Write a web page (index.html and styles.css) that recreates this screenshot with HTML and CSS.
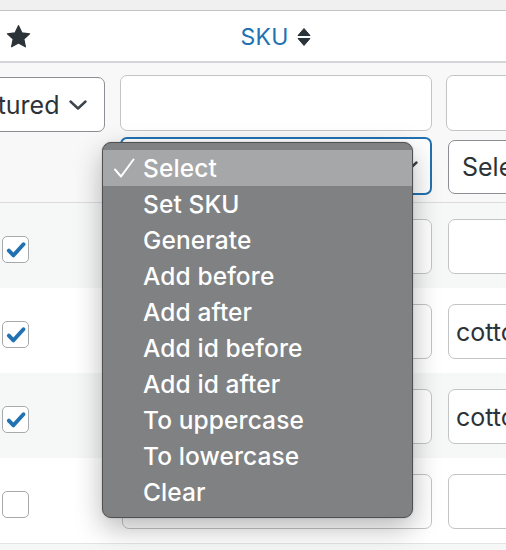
FILE: index.html
```html
<!DOCTYPE html>
<html>
<head>
<meta charset="utf-8">
<link rel="stylesheet" href="styles.css">
</head>
<body>
<div class="page">
  <div class="topband"></div>
  <div class="head grid">
    <div class="c1">
      <svg class="star" viewBox="0 0 24 24" width="25" height="25"><path d="M12 1.6l3.2 6.9 7.4.9-5.5 5.1 1.5 7.4L12 18.2l-6.6 3.7 1.5-7.4-5.5-5.1 7.4-.9z" fill="#2c3338" stroke="#2c3338" stroke-width="1.2" stroke-linejoin="round"/></svg>
    </div>
    <div class="c2">
      <span class="sku">SKU</span>
      <svg class="sort" viewBox="0 0 14 20" width="14" height="20"><path d="M7 1.5L13 8.5H1z" fill="#2c3338" stroke="#2c3338" stroke-linejoin="round" stroke-width="1"/><path d="M7 18.5L13 11.5H1z" fill="#2c3338" stroke="#2c3338" stroke-linejoin="round" stroke-width="1"/></svg>
    </div>
    <div class="c3"></div>
  </div>
  <div class="filters">
    <div class="grid frow1">
      <div class="c1">
        <div class="select featured"><span>Featured</span>
          <svg class="chev" viewBox="0 0 18 10" width="18" height="10"><path d="M1.5 1.5L9 8.5l7.5-7" fill="none" stroke="#3c434a" stroke-width="2.4" stroke-linecap="round" stroke-linejoin="round"/></svg>
        </div>
      </div>
      <div class="c2"><div class="input filt"></div></div>
      <div class="c3"><div class="input filt"></div></div>
    </div>
    <div class="grid frow2">
      <div class="c1"></div>
      <div class="c2"><div class="select focus"><span>Select</span>
        <svg class="chev" viewBox="0 0 18 10" width="18" height="10"><path d="M1.5 1.5L9 8.5l7.5-7" fill="none" stroke="#3c434a" stroke-width="2.4" stroke-linecap="round" stroke-linejoin="round"/></svg>
      </div></div>
      <div class="c3"><div class="select dark"><span>Select</span></div></div>
    </div>
  </div>
  <div class="rows">
    <div class="grid row alt">
      <div class="c1"><span class="cb on"><svg viewBox="0 0 20 20" width="22" height="22"><path d="M3.5 10.5l4.2 4.3L16.8 4.8" fill="none" stroke="#2271b1" stroke-width="3.6" stroke-linecap="round" stroke-linejoin="round"/></svg></span></div>
      <div class="c2"><div class="input"></div></div>
      <div class="c3"><div class="input"></div></div>
    </div>
    <div class="grid row">
      <div class="c1"><span class="cb on"><svg viewBox="0 0 20 20" width="22" height="22"><path d="M3.5 10.5l4.2 4.3L16.8 4.8" fill="none" stroke="#2271b1" stroke-width="3.6" stroke-linecap="round" stroke-linejoin="round"/></svg></span></div>
      <div class="c2"><div class="input"></div></div>
      <div class="c3"><div class="input"><span>cotton</span></div></div>
    </div>
    <div class="grid row alt">
      <div class="c1"><span class="cb on"><svg viewBox="0 0 20 20" width="22" height="22"><path d="M3.5 10.5l4.2 4.3L16.8 4.8" fill="none" stroke="#2271b1" stroke-width="3.6" stroke-linecap="round" stroke-linejoin="round"/></svg></span></div>
      <div class="c2"><div class="input"></div></div>
      <div class="c3"><div class="input"><span>cotton</span></div></div>
    </div>
    <div class="grid row">
      <div class="c1"><span class="cb"></span></div>
      <div class="c2"><div class="input"></div></div>
      <div class="c3"><div class="input"></div></div>
    </div>
  </div>
  <div class="bottom"></div>

  <ul class="menu">
    <li class="sel"><svg class="tick" viewBox="0 0 22 22" width="22" height="22"><path d="M2 12.5L8 19.5 20.5 2.5" fill="none" stroke="#fff" stroke-width="2" stroke-linecap="round" stroke-linejoin="round"/></svg>Select</li>
    <li>Set SKU</li>
    <li>Generate</li>
    <li>Add before</li>
    <li>Add after</li>
    <li>Add id before</li>
    <li>Add id after</li>
    <li>To uppercase</li>
    <li>To lowercase</li>
    <li>Clear</li>
  </ul>
</div>
</body>
</html>
```

FILE: styles.css
```css
html, body {
  margin: 0;
  padding: 0;
  background: #f6f7f7;
}
body {
  font-family: Inter, "Liberation Sans", sans-serif;
  color: #2c3338;
}
.page {
  position: relative;
  width: 506px;
  height: 550px;
  overflow: hidden;
  background: #f6f7f7;
}
.topband {
  height: 10px;
  background: #f0f0f1;
  border-bottom: 1px solid #c3c4c7;
}
.grid {
  display: grid;
  grid-template-columns: 106px 312px 110px;
  column-gap: 14px;
}
.head {
  height: 50px;
  background: #fff;
  border-bottom: 2px solid #d4d5d8;
  align-items: center;
}
.head .c1 {
  display: flex;
  align-items: center;
  padding-left: 6px;
}
.star { display: block; }
.head .c2 {
  display: flex;
  align-items: center;
  justify-content: center;
  gap: 9px;
}
.sku {
  font-size: 23px;
  color: #2271b1;
  letter-spacing: 0.2px;
  margin-top: 1px;
}
.sort { display: block; margin-top: 1px; }

.filters {
  background: #f8f8f8;
  padding: 12px 0 7px;
  border-bottom: 1px solid #dcdcde;
}
.frow1 { height: 56px; }
.frow2 { height: 58px; margin-top: 6px; }

.input {
  box-sizing: border-box;
  height: 55px;
  background: #fff;
  border: 1.5px solid #c3c4c7;
  border-radius: 7px;
  display: flex;
  align-items: center;
  padding-left: 7px;
  font-size: 25px;
  color: #2c3338;
  white-space: nowrap;
  overflow: hidden;
}
.filt { height: 56px; }
.select {
  box-sizing: border-box;
  background: #fff;
  border: 1.5px solid #8c8f94;
  border-radius: 7px;
  display: flex;
  align-items: center;
  font-size: 25px;
  color: #2c3338;
  white-space: nowrap;
  position: relative;
  overflow: hidden;
}
.featured {
  height: 55px;
  margin-top: 2px;
  margin-left: -53px;
  width: 158px;
  padding-left: 7px;
  gap: 10px;
}
.chev { display: block; flex: none; }
.focus {
  height: 58px;
  border: 2px solid #2271b1;
  justify-content: space-between;
  padding: 0 12px;
}
.dark {
  height: 54px;
  margin-top: 3px;
  margin-left: 2px;
  padding-left: 13px;
}

.row {
  height: 85px;
  box-sizing: border-box;
  padding-top: 16px;
  background: #fff;
}
.row.alt { background: #f6f7f7; }
.row .c3 .input { margin-left: 2px; }
.row .c2 .input { margin-left: 2px; width: 310px; }
.row .c1 { padding-left: 2px; }
.cb {
  box-sizing: border-box;
  display: flex;
  align-items: center;
  justify-content: center;
  width: 27px;
  height: 27px;
  margin-top: 17px;
  border: 1.5px solid #a7aaad;
  border-radius: 5px;
  background: #fff;
}
.cb svg { display: block; }
.bottom {
  border-top: 1px solid #e4e4e6;
  height: 10px;
  background: #f6f7f7;
}

.menu {
  position: absolute;
  left: 102px;
  top: 142px;
  width: 311px;
  height: 376px;
  box-sizing: border-box;
  margin: 0;
  padding: 7px 0;
  list-style: none;
  background: #808182;
  border: 1px solid #4f5052;
  border-radius: 9px;
  box-shadow: 0 10px 28px rgba(0, 0, 0, 0.28), 0 0 2px rgba(0, 0, 0, 0.2);
  font-family: Inter, "Liberation Sans", sans-serif;
}
.menu li {
  height: 36px;
  line-height: 36px;
  padding-left: 40px;
  font-size: 24.5px;
  font-weight: 500;
  color: #fff;
  position: relative;
  letter-spacing: 0.1px;
}
.menu li.sel { background: #a6a7a8; }
.tick {
  position: absolute;
  left: 10px;
  top: 7px;
  display: block;
}
```
